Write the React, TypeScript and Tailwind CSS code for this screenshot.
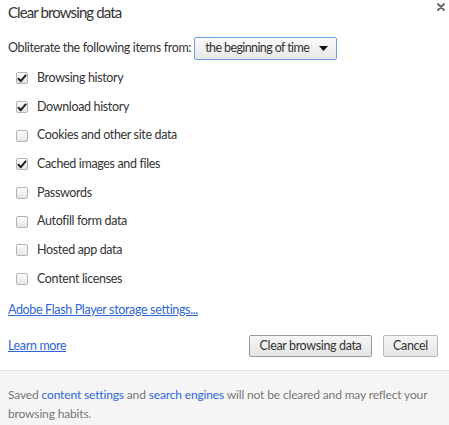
import { useState } from "react";

const ITEMS: { label: string; checked: boolean }[] = [
  { label: "Browsing history", checked: true },
  { label: "Download history", checked: true },
  { label: "Cookies and other site data", checked: false },
  { label: "Cached images and files", checked: true },
  { label: "Passwords", checked: false },
  { label: "Autofill form data", checked: false },
  { label: "Hosted app data", checked: false },
  { label: "Content licenses", checked: false },
];

function Check({ checked, onClick }: { checked: boolean; onClick: () => void }) {
  return (
    <button
      onClick={onClick}
      className="w-[12px] h-[12px] rounded-[2px] border border-[#b4b4b4] bg-gradient-to-b from-[#fdfdfd] to-[#e6e6e6] flex items-center justify-center shrink-0"
    >
      {checked && (
        <svg width="10" height="9" viewBox="0 0 10 9">
          <path d="M1.5 4.8 L3.8 7.2 L8.6 1.4" fill="none" stroke="#222" strokeWidth="2" strokeLinecap="round" strokeLinejoin="round" />
        </svg>
      )}
    </button>
  );
}

export default function App() {
  const [items, setItems] = useState(ITEMS);

  return (
    <div className="w-[449px] h-[425px] bg-white flex flex-col text-[12.5px] tracking-[-0.35px] text-[#333] font-['Lato','Open_Sans',sans-serif] overflow-hidden">
      <div className="flex justify-between pl-[8px] pr-[4px] pt-[1px]">
        <h1 className="text-[15px] tracking-[-0.9px] leading-[22px] text-[#333]">Clear browsing data</h1>
        <svg width="8" height="8" viewBox="0 0 8 8" className="mt-[2px]">
          <path d="M1 1 L7 7 M7 1 L1 7" stroke="#666" strokeWidth="1.8" strokeLinecap="round" />
        </svg>
      </div>

      <div className="flex items-center gap-[3px] pl-[8px] mt-[14px]">
        <span className="whitespace-nowrap">Obliterate the following items from:</span>
        <div className="flex items-center justify-between w-[143px] h-[23px] border border-[#6f9de6] rounded-[2px] bg-gradient-to-b from-[#fafafa] to-[#e8e8e8] pl-[10px] pr-[8px] text-[#333]">
          <span className="whitespace-nowrap tracking-[-0.6px]">the beginning of time</span>
          <svg width="9" height="5" viewBox="0 0 9 5">
            <path d="M0 0 H9 L4.5 5 Z" fill="#111" />
          </svg>
        </div>
      </div>

      <div className="flex flex-col pl-[16px] mt-[4px]">
        {items.map((it, i) => (
          <label key={it.label} className="flex items-center gap-[9px] h-[28.7px]">
            <Check
              checked={it.checked}
              onClick={() => setItems(items.map((x, j) => (j === i ? { ...x, checked: !x.checked } : x)))}
            />
            <span>{it.label}</span>
          </label>
        ))}
      </div>

      <a className="ml-[8px] mt-[7px] text-[#2f66d6] underline w-fit">Adobe Flash Player storage settings...</a>

      <div className="flex items-center justify-between pl-[8px] pr-[11px] mt-[16px]">
        <a className="text-[#2f66d6] underline">Learn more</a>
        <div className="flex gap-[11px]">
          <button className="h-[22px] w-[123px] border border-[#9a9a9a] rounded-[2px] bg-gradient-to-b from-[#f6f6f6] to-[#e4e4e4] text-[#333] whitespace-nowrap">
            Clear browsing data
          </button>
          <button className="h-[22px] w-[55px] border border-[#b8b8b8] rounded-[2px] bg-gradient-to-b from-[#f6f6f6] to-[#e4e4e4] text-[#333]">
            Cancel
          </button>
        </div>
      </div>

      <div className="mt-[13px] flex-1 border-t border-[#e3e3e3] bg-[#f5f5f5] px-[8px] pt-[14px] text-[#777] leading-[19px] text-[12px] tracking-[-0.15px]">
        <p>
          Saved <a className="text-[#2f66d6]">content settings</a> and <a className="text-[#2f66d6]">search engines</a> will
          not be cleared and may reflect your browsing habits.
        </p>
      </div>
    </div>
  );
}
